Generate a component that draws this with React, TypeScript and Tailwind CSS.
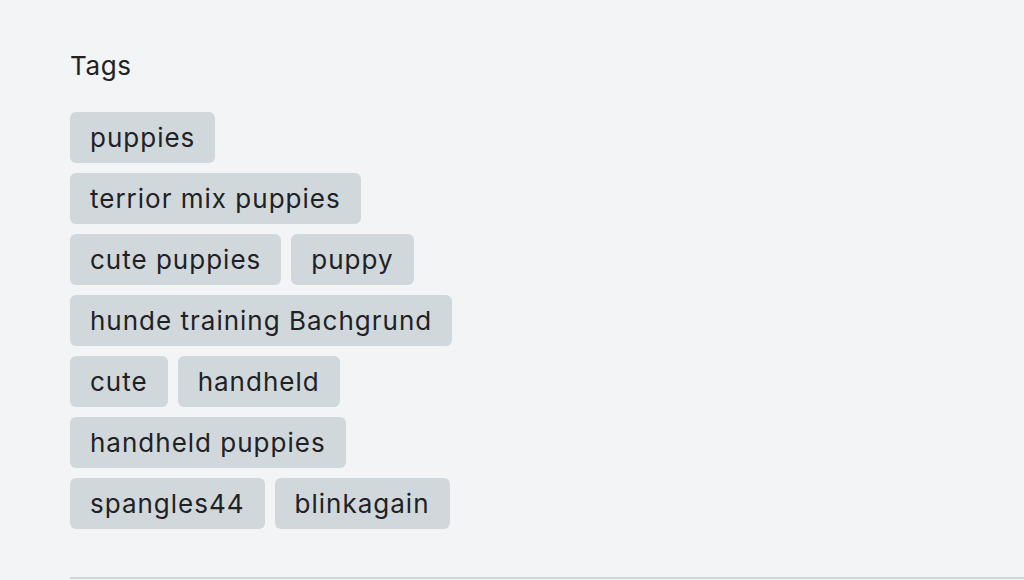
import React from "react";

const tags = [
  "puppies",
  "terrior mix puppies",
  "cute puppies",
  "puppy",
  "hunde training Bachgrund",
  "cute",
  "handheld",
  "handheld puppies",
  "spangles44",
  "blinkagain",
];

export default function App() {
  return (
    <div
      className="min-h-[580px] w-[1024px] overflow-hidden bg-[#f3f4f6] text-[#1f2124]"
      style={{ fontFamily: "Inter, 'Noto Sans', sans-serif" }}
    >
      <div className="pl-[70px] pt-[50px]">
        <h2 className="text-[26px] leading-[31px] font-normal tracking-[0.6px]">Tags</h2>
        <div className="mt-[31px] flex w-[420px] flex-wrap gap-[10px]">
          {tags.map((t) => (
            <span
              key={t}
              className="flex h-[51px] items-center rounded-[6px] bg-[#d1d8dc] px-[20px] text-[26px] leading-[31px] tracking-[1px]"
            >
              {t}
            </span>
          ))}
        </div>
        <div className="mt-[48px] h-[2px] w-full bg-[#cfd6da]" />
      </div>
    </div>
  );
}
